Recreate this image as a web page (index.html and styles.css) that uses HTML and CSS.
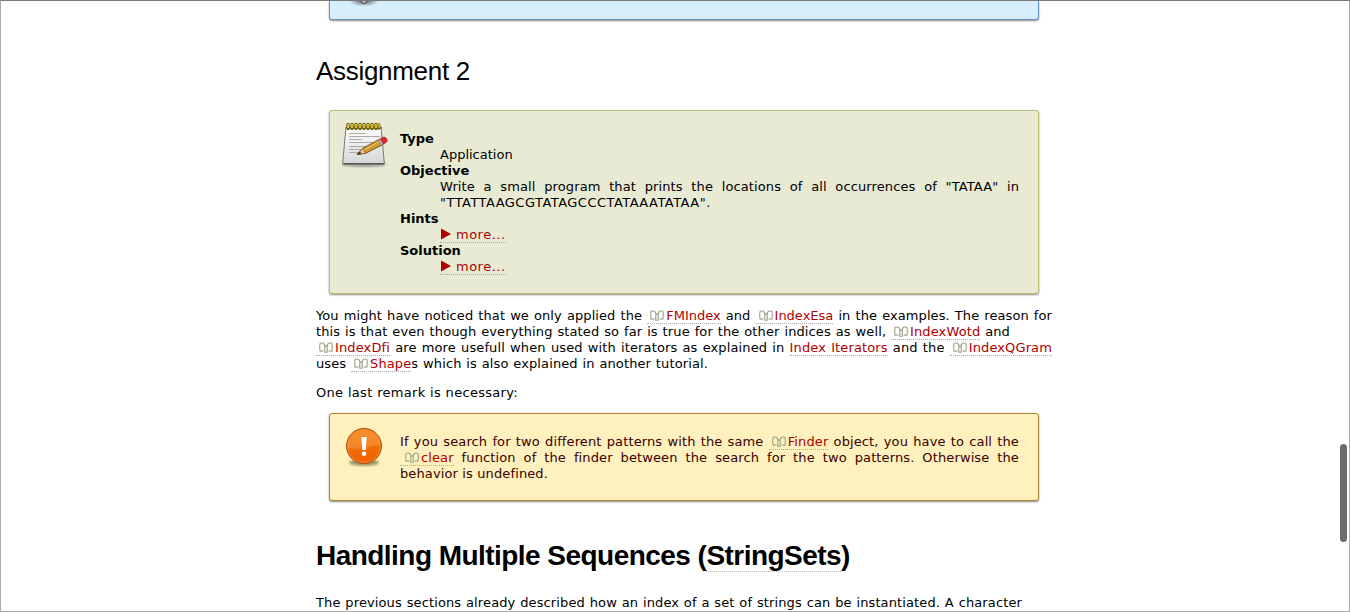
FILE: index.html
```html
<!DOCTYPE html>
<html lang="en">
<head>
<meta charset="utf-8">
<title>Index Tutorial</title>
<link rel="stylesheet" href="styles.css">
</head>
<body>
<svg class="defs" width="0" height="0">
  <symbol id="book" viewBox="0 0 14 11">
    <path d="M4.500 9.200C3.500 8.700 2.300 8.800 1.200 9.200.5 6.500.5 3.800 1.200 1.200 3.500.5 5.500 1.200 5.800 3.500v6.800h2.400V3.500C8.500 1.200 10.500.5 12.800 1.200c.7 2.600.7 5.300 0 8-1.100-.4-2.300-.5-3.300 0M4.200 1.200L7 4.500l2.800-3.300" fill="none" stroke="#9aa386" stroke-width="1.100"/>
  </symbol>
</svg>
<div class="window">
  <main class="page">
    <div class="box info">
      <svg class="knob" width="48" height="8" viewBox="0 0 48 8">
        <defs><radialGradient id="shade"><stop offset="0" stop-color="#333" stop-opacity=".85"/><stop offset="1" stop-color="#555" stop-opacity="0"/></radialGradient></defs>
        <ellipse cx="22" cy="0" rx="15" ry="5.500" fill="url(#shade)"/>
        <circle cx="22" cy="-.5" r="3" fill="#bbb" stroke="#444"/>
      </svg>
    </div>
    <h2>Assignment 2</h2>
    <div class="box assignment">
      <svg class="icon" width="48" height="48" viewBox="0 0 48 48">
        <defs>
          <linearGradient id="paper" x1="0" y1="0" x2="0" y2="1"><stop offset="0" stop-color="#fff"/><stop offset="1" stop-color="#d5d5d5"/></linearGradient>
          <filter id="soft"><feGaussianBlur stdDeviation="1"/></filter>
        </defs>
        <ellipse cx="23" cy="42.500" rx="22" ry="2.500" fill="#555" opacity=".5" filter="url(#soft)"/>
        <path d="M5 5h35l3.300 36q.2 1.500-1.300 1.500h-39q-1.500 0-1.300-1.500z" fill="url(#paper)" stroke="#777"/>
        <path d="M2.500 41.500h41" stroke="#555"/>
        <path d="M8 11.500h17M8 14.500h31M8 17.500h13M8 20.500h30M8 24.500h22M8 27.500h16M8 30.500h12" stroke="#aaa"/>
        <path d="M5 6h36" stroke="#777" stroke-width="2"/>
        <path d="M7 2.500v4M11 2.500v4M15 2.500v4M19 2.500v4M23 2.500v4M27 2.500v4M31 2.500v4M35 2.500v4" stroke="#72630b" stroke-width="3.400" stroke-linecap="round"/>
        <path d="M7 2v4M11 2v4M15 2v4M19 2v4M23 2v4M27 2v4M31 2v4M35 2v4" stroke="#e3c93c" stroke-width="1.700"/>
        <path d="M38 2.500v4" stroke="#72630b" stroke-width="2.600" stroke-linecap="round"/>
        <path d="M38 2v4" stroke="#e3c93c" stroke-width="1.200"/>
        <path d="M16 32.500l6-6.300 17-9.200 3 5.500-17.500 8.800z" fill="#d59b32" stroke="#765015"/>
        <path d="M16 32.500l6-6.300 2.500 5.100z" fill="#e7c68a" stroke="#765015" stroke-width=".6"/>
        <path d="M16 32.500l3-3 1.200 2.200z" fill="#2d2416"/>
        <path d="M23.500 27.700L39 19" stroke="#f1c75e"/>
        <path d="M37.500 17.800l2.500-1.300 2.800 5.300-2.500 1.400z" fill="#b5b5b5" stroke="#777" stroke-width=".5"/>
        <path d="M39.500 16.700l3-1.500q2.500-.5 3.500 2.500.5 2-1 2.700l-2.500 1.700z" fill="#df2929" stroke="#8d1717" stroke-width=".7"/>
      </svg>
      <dl>
        <dt>Type</dt>
        <dd>Application</dd>
        <dt>Objective</dt>
        <dd><span class="line full">Write a small program that prints the locations of all occurrences of "TATAA" in</span><span class="line w-seq">"TTATTAAGCGTATAGCCCTATAAATATAA".</span></dd>
        <dt>Hints</dt>
        <dd><a class="link more"><svg width="16" height="12" viewBox="0 0 16 12"><path d="M1 .5l10 5.500-10 5.500z" fill="#b00000"/></svg>more...</a></dd>
        <dt>Solution</dt>
        <dd><a class="link more"><svg width="16" height="12" viewBox="0 0 16 12"><path d="M1 .5l10 5.500-10 5.500z" fill="#b00000"/></svg>more...</a></dd>
      </dl>
    </div>
    <p>
      <span class="line lead">You might have noticed that we only applied the <a class="link"><svg class="book"><use href="#book"/></svg>FMIndex</a> and <a class="link"><svg class="book"><use href="#book"/></svg>IndexEsa</a> in the examples. The reason for</span>
      <span class="line w-wotd">this is that even though everything stated so far is true for the other indices as well, <a class="link"><svg class="book"><use href="#book"/></svg>IndexWotd</a> and</span>
      <span class="line full"><a class="link"><svg class="book"><use href="#book"/></svg>IndexDfi</a> are more usefull when used with iterators as explained in <a class="link">Index Iterators</a> and the <a class="link"><svg class="book"><use href="#book"/></svg>IndexQGram</a></span>
      <span class="line w-shape">uses <a class="link"><svg class="book"><use href="#book"/></svg>Shape</a>s which is also explained in another tutorial.</span>
    </p>
    <p><span class="line w-remark">One last remark is necessary:</span></p>
    <div class="box warning">
      <svg class="icon" width="48" height="48" viewBox="0 0 48 48">
        <defs><linearGradient id="orange" x1="0" y1="0" x2="0" y2="1"><stop offset="0" stop-color="#f57900"/><stop offset="1" stop-color="#f06000"/></linearGradient></defs>
        <ellipse cx="24" cy="37.500" rx="15" ry="3.500" fill="#655c2c" opacity=".6" filter="url(#soft)"/>
        <circle cx="24" cy="21" r="17.500" fill="url(#orange)" stroke="#a94d0c"/>
        <circle cx="24" cy="21" r="16.400" fill="none" stroke="#f58a3a"/>
        <path d="M7.500 23a16.500 16.500 0 1 1 33-2.500c-10-.5-15 5-33 2.500z" fill="#fff" opacity=".17"/>
        <path d="M21.300 12h5.400l-1 13h-3.400z" fill="#fff"/>
        <circle cx="24" cy="28.700" r="2.300" fill="#fff"/>
      </svg>
      <div class="text">
        <span class="line full">If you search for two different patterns with the same <a class="link"><svg class="book"><use href="#book"/></svg>Finder</a> object, you have to call the</span>
        <span class="line full"><a class="link wide"><svg class="book"><use href="#book"/></svg>clear</a> function of the finder between the search for the two patterns. Otherwise the</span>
        <span class="line w-behavior">behavior is undefined.</span>
      </div>
    </div>
    <h1>Handling Multiple Sequences (<a>StringSets</a>)</h1>
    <p><span class="line w-prev">The previous sections already described how an index of a set of strings can be instantiated. A character</span></p>
  </main>
  <div class="scrollbar"></div>
</div>
</body>
</html>
```
FILE: styles.css
```css
* { box-sizing: border-box; }
body { margin: 0; background: #fff; color: #000; font: 13px/16px Verdana, "DejaVu Sans", sans-serif; overflow: hidden; }
.defs { position: absolute; }
.window { position: relative; height: 612px; overflow: hidden; border: 1px solid #aaa; border-top-color: #777; }
.page { width: 736px; margin-left: 315px; }
.box { display: flex; width: 710px; margin-left: 13px; border: 1px solid; border-radius: 3px; box-shadow: 0 1px 2px #888; }
.info { height: 19px; border-color: #6595ca; border-top: 0; border-radius: 0 0 3px 3px; background: #d7eefc; }
.knob { margin-left: 12px; }
.assignment { height: 184px; padding: 20px 19px 0 12px; border-color: #bdbf78; background: #e8ead4; }
.warning { height: 88px; padding: 20px 19px 0 11px; border-color: #b08334; background: #fff1bd; color: #3a0000; }
.icon { flex: none; margin: -9px 11px 0 -1px; }
.warning .icon { margin-right: 12px; }
h1, h2 { font-family: Arial, "Liberation Sans", sans-serif; }
h2 { margin: 36px 0 24px; font-size: 26px; line-height: 30px; font-weight: normal; letter-spacing: -0.3px; }
h1 { margin: 38px 0 23px; font-size: 28px; line-height: 33px; letter-spacing: -0.54px; white-space: nowrap; }
h1 a { border-bottom: 1px dotted #bbb; }
dl { flex: 1; margin: 0; }
dt { font-weight: bold; }
dd { margin: 0 0 0 40px; }
p { margin: 14px 0 13px; }
p + p { margin: 13px 0 12px; }
h1 + p { margin-top: 23px; }
.text { flex: 1; }
.line { display: block; white-space: nowrap; letter-spacing: 0.12px; text-align: justify; text-align-last: justify; }
.lead { letter-spacing: 0.08px; }
.lead .link { letter-spacing: 0; }
.w-seq { width: 270px; letter-spacing: 0.47px; }
.w-wotd { width: 694px; }
.w-shape { width: 392px; }
.w-remark { width: 202px; letter-spacing: 0.3px; }
.w-behavior { width: 148px; }
.w-prev { width: 706px; }
.link { color: #b00000; border-bottom: 1px dotted #aaa; }
.link svg { vertical-align: -1px; }
.link .book { width: 14px; height: 11px; margin: 0 2px 0 3px; }
.wide .book { margin-left: 5px; }
.more { letter-spacing: 0.5px; }
.scrollbar { position: absolute; top: 443px; left: 1339px; width: 7px; height: 98px; border-radius: 4px; background: #6c6c6c; }
```
